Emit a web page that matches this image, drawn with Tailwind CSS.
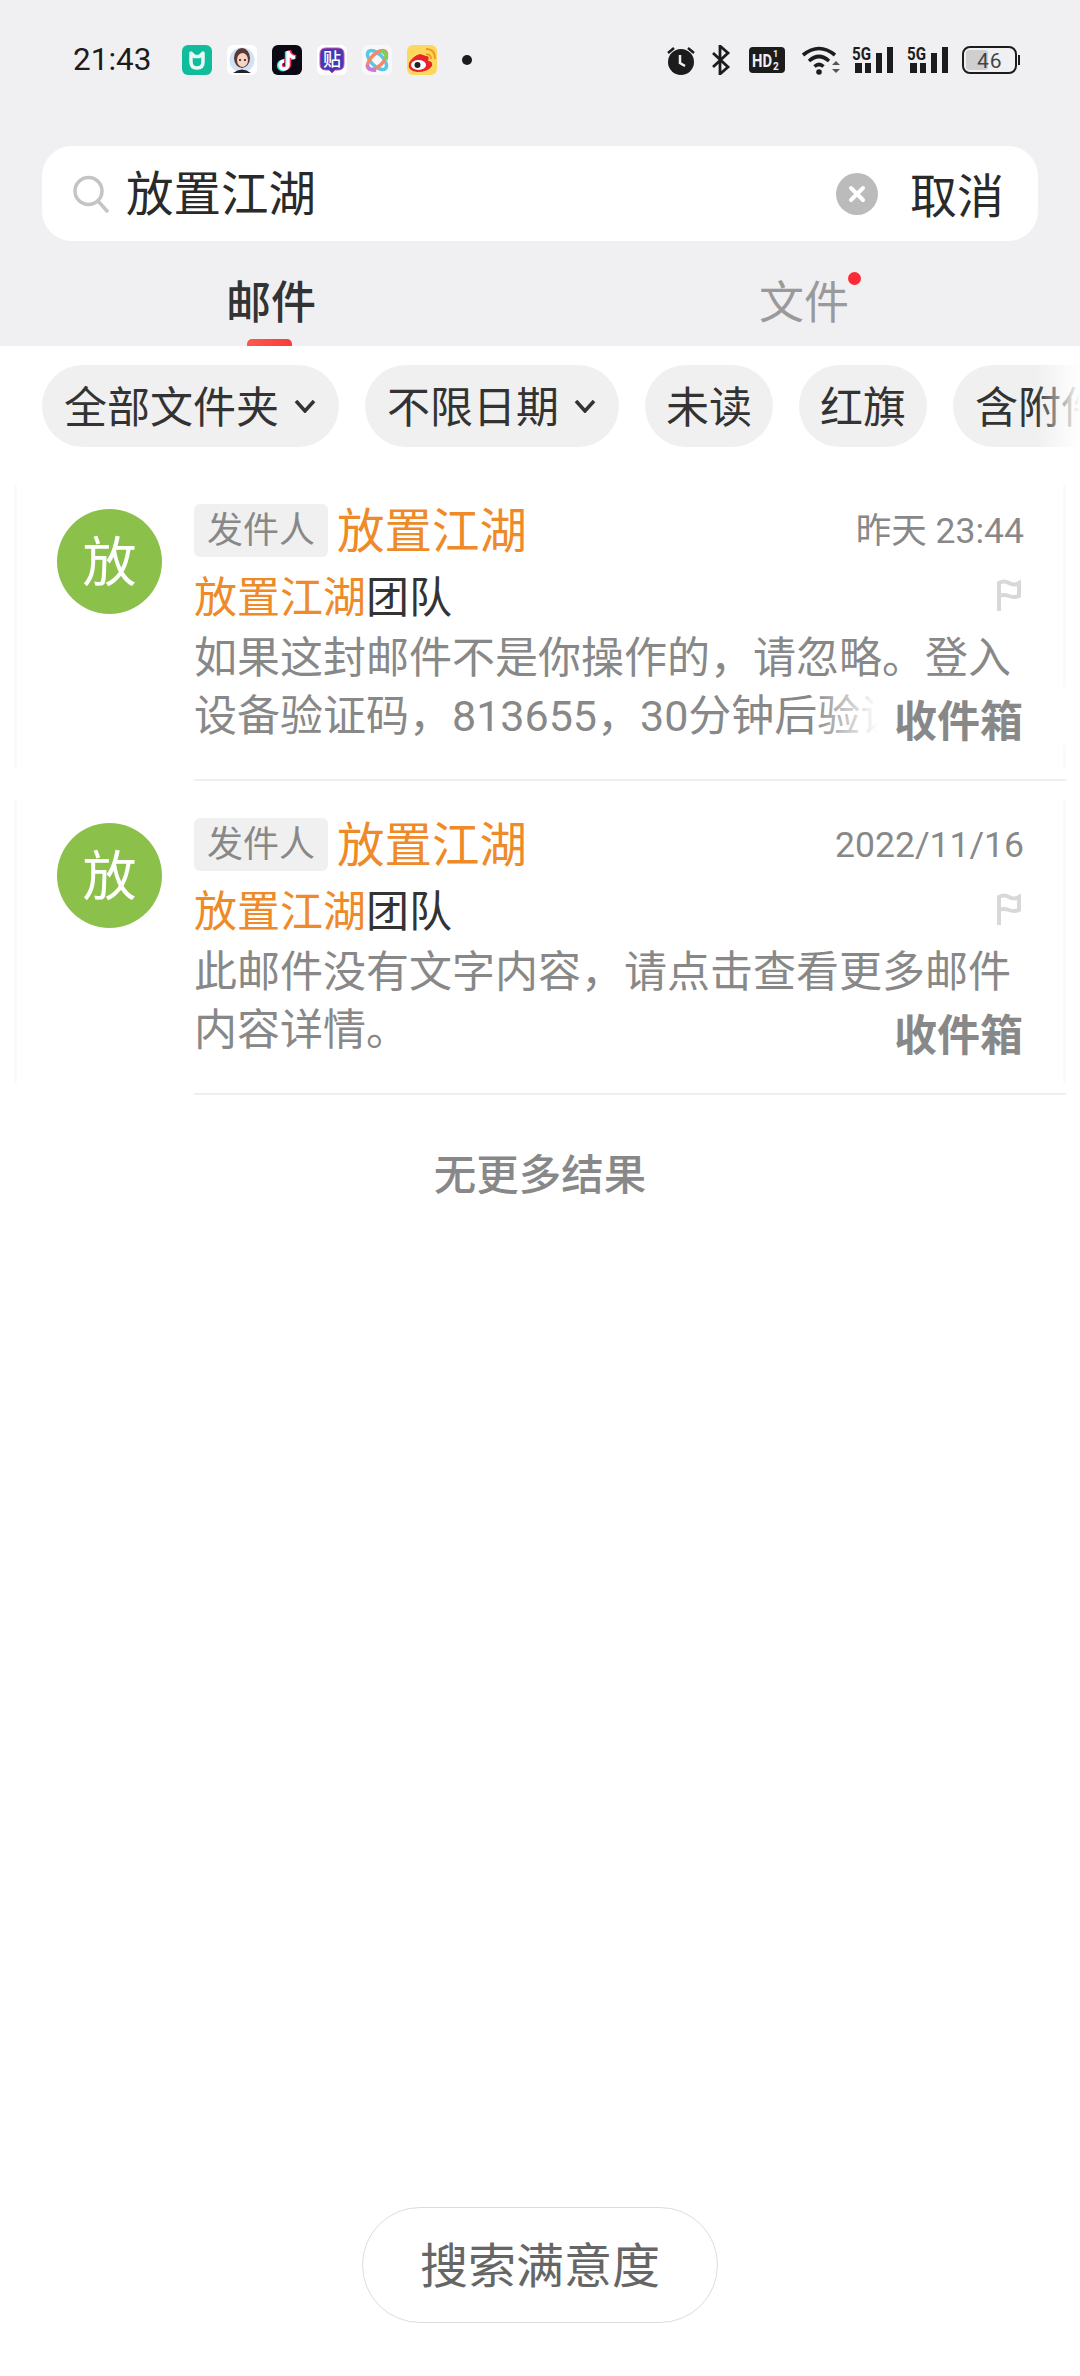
<!DOCTYPE html>
<html lang="zh-CN">
<head>
    <meta charset="UTF-8">
    <meta name="viewport" content="width=device-width, initial-scale=1.0">
    <title>搜索</title>
    <script src="https://cdn.jsdelivr.net/npm/@tailwindcss/browser@4"></script>
</head>
<body class="w-[1080px] h-[2376px] bg-white overflow-hidden relative font-['Roboto','Noto_Sans_CJK_SC',sans-serif]">
    <!-- top grey area -->
    <div class="bg-[#f0f0f3] h-[346px] flex flex-col">
        <!-- status bar -->
        <div class="h-[120px] flex items-center pl-[73px] pr-[60px] text-[#1c1c1c]">
            <span class="text-[31.500px] leading-none w-[109px]">21:43</span>
            <div class="flex items-center gap-[15px]">
                <svg class="w-[30px] h-[30px] shrink-0" viewBox="0 0 30 30"><rect width="30" height="30" rx="6" fill="#0fbc9c"/><path d="M9 8v9q0 6 6 6t6-6V8l-3.500 3.500h-5z" fill="none" stroke="#e8f8f4" stroke-width="3.500" stroke-linejoin="round"/></svg>
                <svg class="w-[30px] h-[30px] shrink-0" viewBox="0 0 30 30"><rect width="30" height="30" rx="6" fill="#fff"/><circle cx="15" cy="15" r="12.500" fill="#cfe2f8"/><path d="M6 28q9-7 18 0z" fill="#222"/><ellipse cx="15" cy="13" rx="8" ry="10" fill="#5a3a30"/><ellipse cx="15.500" cy="15" rx="5.500" ry="7" fill="#f6d3c3"/><circle cx="13" cy="15" r="1.100" fill="#222"/><circle cx="18" cy="15" r="1.100" fill="#222"/></svg>
                <svg class="w-[30px] h-[30px] shrink-0" viewBox="0 0 30 30"><rect width="30" height="30" rx="6" fill="#0b0a14"/><path d="M16 6v14a4 4 0 1 1-4-4M16 6q1 6 7 6.500" fill="none" stroke="#26e0e6" stroke-width="4" transform="translate(-1.200 .6)"/><path d="M16 6v14a4 4 0 1 1-4-4M16 6q1 6 7 6.500" fill="none" stroke="#f5305a" stroke-width="4" transform="translate(1.200 -.6)"/><path d="M16 6v14a4 4 0 1 1-4-4M16 6q1 6 7 6.500" fill="none" stroke="#fff" stroke-width="3.400"/></svg>
                <svg class="w-[30px] h-[30px] shrink-0" viewBox="0 0 30 30"><rect width="30" height="30" rx="6" fill="#fff"/><path d="M9 3h12q6 0 6 6v10q0 6-6 6h-3l-3 3-3-3H9q-6 0-6-6V9q0-6 6-6z" fill="#4538b8" stroke="#d2509c" stroke-width="1"/><text x="15" y="21" text-anchor="middle" font-size="18" font-weight="500" fill="#fff" font-family="Noto Sans CJK SC">贴</text></svg>
                <svg class="w-[30px] h-[30px] shrink-0" viewBox="0 0 30 30"><rect width="30" height="30" rx="6" fill="#f8f8fa"/><ellipse cx="15" cy="15" rx="12" ry="6" transform="rotate(45 15 15)" fill="none" stroke="#55c8ea" stroke-width="3.500"/><ellipse cx="15" cy="15" rx="12" ry="6" transform="rotate(-45 15 15)" fill="none" stroke="#f08a6a" stroke-width="3.500"/><path d="M19 6q7 2 5 9" fill="none" stroke="#6ed85c" stroke-width="3.500"/><path d="M5 20q2 6 9 5" fill="none" stroke="#c07af0" stroke-width="3.500"/></svg>
                <svg class="w-[30px] h-[30px] shrink-0" viewBox="0 0 30 30"><rect width="30" height="30" rx="6" fill="#fdd85e"/><path d="M13 9q-7 2-11 9-2 8 8 9 11 0 15-6 1-5-4-5 2-5-2-5-3-1-6-2z" fill="#e8242c"/><ellipse cx="11.500" cy="20" rx="7.500" ry="5" fill="#fff"/><circle cx="10.500" cy="20" r="3" fill="#222"/><path d="M19 9q5 0 5 5M19 4q9 0 9 10" fill="none" stroke="#f39a1e" stroke-width="2"/></svg>
            </div>
            <span class="ml-[25px] w-[10px] h-[10px] rounded-full bg-[#1c1c1c]"></span>
            <div class="ml-auto flex items-center">
                <svg class="w-[30px] h-[32px]" viewBox="0 0 30 32"><circle cx="15" cy="18" r="13" fill="#1c1c1c"/><path d="M2 9l6-5M28 9l-6-5" stroke="#1c1c1c" stroke-width="2.500"/><path d="M14 11v8l5 3" fill="none" stroke="#f0f0f3" stroke-width="2.500"/></svg>
                <svg class="ml-[15px] w-[20px] h-[30px]" viewBox="0 0 20 30"><path d="M2 8l15 14-8 7V1l8 7L2 22" fill="none" stroke="#1c1c1c" stroke-width="2.800"/></svg>
                <svg class="ml-[18px] w-[36px] h-[26px]" viewBox="0 0 36 26"><rect width="36" height="26" rx="4" fill="#1c1c1c"/><text x="3" y="20" font-size="19" font-weight="700" fill="#f0f0f3" font-family="Roboto" textLength="20" lengthAdjust="spacingAndGlyphs">HD</text><text x="24" y="10" font-size="9" font-weight="700" fill="#f0f0f3" font-family="Roboto">1</text><text x="24" y="23" font-size="10" font-weight="700" fill="#f0f0f3" font-family="Roboto">2</text></svg>
                <svg class="ml-[16px] w-[40px] h-[30px]" viewBox="0 0 40 30"><path d="M2 10q16-13 32 0M8 16q10-9 20 0M13.500 21.500q4.500-4 9 0" fill="none" stroke="#1c1c1c" stroke-width="3.600"/><circle cx="18" cy="27" r="2.800" fill="#1c1c1c"/><path d="M31 20l4-4 4 4zM31 24h8l-4 4z" fill="#555"/></svg>
                <svg class="ml-[11px] w-[41px] h-[28px] overflow-visible" viewBox="0 0 41 28"><text x="0" y="14" font-size="18" font-weight="700" fill="#1c1c1c" font-family="Roboto" textLength="19" lengthAdjust="spacingAndGlyphs">5G</text><rect x="3" y="17" width="7" height="10" fill="#1c1c1c"/><rect x="13" y="17" width="6" height="10" fill="#1c1c1c"/><rect x="24" y="7" width="6" height="20" fill="#1c1c1c"/><rect x="35" y="1" width="6" height="26" fill="#1c1c1c"/></svg>
                <svg class="ml-[14px] w-[41px] h-[28px] overflow-visible" viewBox="0 0 41 28"><text x="0" y="14" font-size="18" font-weight="700" fill="#1c1c1c" font-family="Roboto" textLength="19" lengthAdjust="spacingAndGlyphs">5G</text><rect x="3" y="17" width="7" height="10" fill="#1c1c1c"/><rect x="13" y="17" width="6" height="10" fill="#1c1c1c"/><rect x="24" y="7" width="6" height="20" fill="#1c1c1c"/><rect x="35" y="1" width="6" height="26" fill="#1c1c1c"/></svg>
                <svg class="ml-[14px] w-[58px] h-[28px]" viewBox="0 0 58 28"><rect x="1" y="1" width="53" height="26" rx="7" fill="none" stroke="#1c1c1c" stroke-width="2"/><rect x="4" y="4" width="22" height="20" rx="3" fill="#cfcfcf"/><rect x="56" y="9" width="2" height="10" fill="#1c1c1c"/><text x="15" y="22" font-size="21" fill="#444" font-family="Roboto" letter-spacing="1">46</text></svg>
            </div>
        </div>
        <!-- search box -->
        <div class="mt-[26px] mx-[42px] h-[95px] bg-white rounded-[30px] flex items-center pl-[31px] pr-[34px]">
            <svg class="w-[36px] h-[38px]" viewBox="0 0 36 38"><circle cx="15.500" cy="16" r="13.500" fill="none" stroke="#c4c4c4" stroke-width="3.500"/><path d="M25 26l9 10" stroke="#c4c4c4" stroke-width="3.500" stroke-linecap="round"/></svg>
            <span class="ml-[17px] pt-[4px] text-[47.500px] leading-none text-[#2a2a2a]">放置江湖</span>
            <svg class="ml-auto w-[42px] h-[42px]" viewBox="0 0 42 42"><circle cx="21" cy="21" r="21" fill="#bbb"/><path d="M15 15l12 12M27 15L15 27" stroke="#fff" stroke-width="4" stroke-linecap="round"/></svg>
            <span class="ml-[32px] pt-[5px] text-[47px] leading-none text-[#2a2a2a]">取消</span>
        </div>
        <!-- tabs -->
        <div class="flex-1 relative">
            <span class="absolute left-[226px] top-[38px] text-[45px] leading-[50px] font-medium text-[#333]">邮件</span>
            <span class="absolute left-[247px] bottom-0 w-[45px] h-[7px] rounded-t-[5px] bg-linear-to-r from-[#fb5a4c] to-[#f93a3c]"></span>
            <span class="absolute left-[759px] top-[38px] text-[45px] leading-[50px] text-[#9a9a9a]">文件</span>
            <span class="absolute left-[848px] top-[31px] w-[13px] h-[13px] rounded-full bg-[#fb2a34]"></span>
        </div>
    </div>

    <!-- filter chips -->
    <div class="relative mt-[19px] h-[82px] pl-[42px] flex gap-[26px] overflow-hidden text-[#333] text-[43px] whitespace-nowrap">
        <div class="h-[82px] w-[297px] shrink-0 rounded-full bg-[#f0f0f0] flex items-center pl-[22px]">
            <span class="leading-none pt-[4px]">全部文件夹</span>
            <svg class="ml-[15px] w-[22px] h-[14px]" viewBox="0 0 22 14"><path d="M2 2l9 10 9-10" fill="none" stroke="#333" stroke-width="3.500"/></svg>
        </div>
        <div class="h-[82px] w-[254px] shrink-0 rounded-full bg-[#f0f0f0] flex items-center pl-[22px]">
            <span class="leading-none pt-[4px]">不限日期</span>
            <svg class="ml-[15px] w-[22px] h-[14px]" viewBox="0 0 22 14"><path d="M2 2l9 10 9-10" fill="none" stroke="#333" stroke-width="3.500"/></svg>
        </div>
        <div class="h-[82px] w-[128px] shrink-0 rounded-full bg-[#f0f0f0] flex items-center justify-center"><span class="leading-none pt-[4px]">未读</span></div>
        <div class="h-[82px] w-[128px] shrink-0 rounded-full bg-[#f0f0f0] flex items-center justify-center"><span class="leading-none pt-[4px]">红旗</span></div>
        <div class="h-[82px] w-[190px] shrink-0 rounded-full bg-[#f0f0f0] flex items-center pl-[22px]"><span class="leading-none pt-[4px]">含附件</span></div>
        <div class="absolute right-0 top-0 h-full w-[44px] bg-linear-to-r from-white/0 to-white"></div>
    </div>

    <!-- mail list -->
    <div class="mt-[38px]">
        <div class="h-[314px] flex pl-[57px] pt-[19px] relative">
            <div class="absolute left-[14px] right-[14px] top-0 bottom-[30px] border-x-[3px] border-[#fafafa]"></div>
            <div class="relative w-[105px] h-[105px] mt-[5px] pt-[4px] rounded-full bg-[#8bc04a] text-white text-[54px] leading-none flex items-center justify-center shrink-0">放</div>
            <div class="relative ml-[32px] flex-1 flex flex-col mr-[14px] h-[277px] border-b-2 border-[#efefef]">
                <div class="flex items-center h-[53px] pr-[42px]">
                    <span class="w-[134px] h-[53px] pt-[2px] rounded-[6px] bg-[#f0f0f0] text-[36px] leading-[51px] text-center text-[#888]">发件人</span>
                    <span class="ml-[9px] pt-[5px] text-[47.500px] leading-none text-[#ef8a28]">放置江湖</span>
                    <span class="ml-auto pt-[2px] text-[35.500px] leading-none text-[#888]">昨天 23:44</span>
                </div>
                <div class="mt-[11px] h-[60px] flex items-center pr-[44px] text-[43px] leading-none text-[#333]">
                    <span><span class="text-[#ef8a28]">放置江湖</span>团队</span>
                    <svg class="ml-auto mb-[7px] w-[26px] h-[32px]" viewBox="0 0 26 32"><path d="M3 32V4q5-3 10 0t10 0v13q-5 2-10 0t-10 0" fill="none" stroke="#d8d8d8" stroke-width="4"/></svg>
                </div>
                <div class="mt-[1px] relative text-[43px] leading-[58px] text-[#888] whitespace-nowrap">
                    <p>如果这封邮件不是你操作的，请忽略。登入</p>
                    <p>设备验证码，813655，30分钟后验证</p>
                    <div class="absolute left-[618px] bottom-0 w-[66px] h-[58px] bg-linear-to-r from-white/0 to-white"></div>
                    <div class="absolute left-[684px] bottom-0 w-[200px] h-[58px] bg-white"></div>
                    <span class="absolute right-[43px] bottom-[-6px] text-[43px] leading-[58px] font-bold">收件箱</span>
                </div>
            </div>
        </div>
        <div class="h-[314px] flex pl-[57px] pt-[19px] relative">
            <div class="absolute left-[14px] right-[14px] top-0 bottom-[30px] border-x-[3px] border-[#fafafa]"></div>
            <div class="relative w-[105px] h-[105px] mt-[5px] pt-[4px] rounded-full bg-[#8bc04a] text-white text-[54px] leading-none flex items-center justify-center shrink-0">放</div>
            <div class="relative ml-[32px] flex-1 flex flex-col mr-[14px] h-[277px] border-b-2 border-[#efefef]">
                <div class="flex items-center h-[53px] pr-[42px]">
                    <span class="w-[134px] h-[53px] pt-[2px] rounded-[6px] bg-[#f0f0f0] text-[36px] leading-[51px] text-center text-[#888]">发件人</span>
                    <span class="ml-[9px] pt-[5px] text-[47.500px] leading-none text-[#ef8a28]">放置江湖</span>
                    <span class="ml-auto pt-[2px] text-[35.500px] leading-none text-[#888]">2022/11/16</span>
                </div>
                <div class="mt-[11px] h-[60px] flex items-center pr-[44px] text-[43px] leading-none text-[#333]">
                    <span><span class="text-[#ef8a28]">放置江湖</span>团队</span>
                    <svg class="ml-auto mb-[7px] w-[26px] h-[32px]" viewBox="0 0 26 32"><path d="M3 32V4q5-3 10 0t10 0v13q-5 2-10 0t-10 0" fill="none" stroke="#d8d8d8" stroke-width="4"/></svg>
                </div>
                <div class="mt-[1px] relative text-[43px] leading-[58px] text-[#888] whitespace-nowrap">
                    <p>此邮件没有文字内容，请点击查看更多邮件</p>
                    <p>内容详情。</p>
                    <span class="absolute right-[43px] bottom-[-6px] text-[43px] leading-[58px] font-bold">收件箱</span>
                </div>
            </div>
        </div>
    </div>

    <p class="mt-[33px] text-center text-[42.500px] leading-[60px] font-medium text-[#888]">无更多结果</p>

    <!-- satisfaction button -->
    <div class="absolute left-[362px] top-[2207px] w-[356px] h-[116px] rounded-full border border-[#dcdcdc] bg-white flex items-center justify-center pt-[3px] text-[48px] leading-none text-[#666]">搜索满意度</div>
</body>
</html>
